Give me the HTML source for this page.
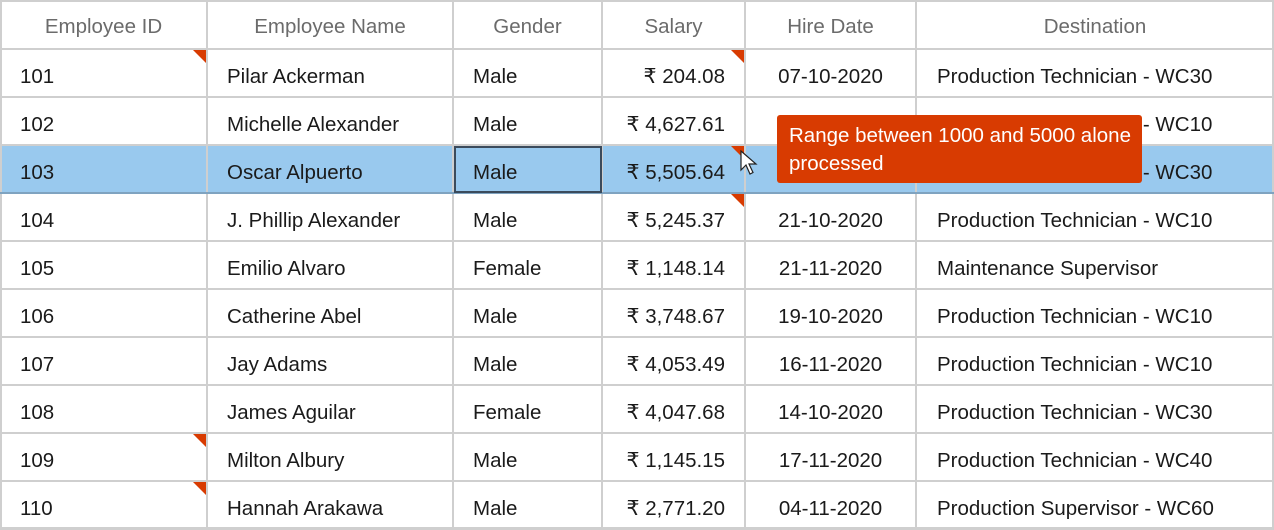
<!DOCTYPE html>
<html><head><style>
body{margin:0;width:1274px;height:529px;overflow:hidden;background:#fff;font-family:"Liberation Sans",sans-serif;font-size:20.5px;color:#1a1a1a;position:relative}
.c{position:absolute;box-sizing:border-box;white-space:nowrap;line-height:52px;overflow:hidden}
.h{color:#6b6b6b;text-align:center;line-height:54px}
.vl{position:absolute;top:0;width:2px;height:529px;background:#cfcfcf}
.hl{position:absolute;left:0;width:1274px;height:2px;background:#cfcfcf}
.tri{position:absolute;width:0;height:0;border-top:13px solid #d83b01;border-left:13px solid transparent}
</style></head><body>
<div style="position:absolute;left:0;top:145px;width:1274px;height:48px;background:#99c9ee"></div>
<div id="g"></div>
<script>
var cols=[0,207,453,602,745,916,1274];
var H=["Employee ID","Employee Name","Gender","Salary","Hire Date","Destination"];
var R=[["101","Pilar Ackerman","Male","₹ 204.08","07-10-2020","Production Technician - WC30"],
["102","Michelle Alexander","Male","₹ 4,627.61","","Production Technician - WC10"],
["103","Oscar Alpuerto","Male","₹ 5,505.64","","Production Technician - WC30"],
["104","J. Phillip Alexander","Male","₹ 5,245.37","21-10-2020","Production Technician - WC10"],
["105","Emilio Alvaro","Female","₹ 1,148.14","21-11-2020","Maintenance Supervisor"],
["106","Catherine Abel","Male","₹ 3,748.67","19-10-2020","Production Technician - WC10"],
["107","Jay Adams","Male","₹ 4,053.49","16-11-2020","Production Technician - WC10"],
["108","James Aguilar","Female","₹ 4,047.68","14-10-2020","Production Technician - WC30"],
["109","Milton Albury","Male","₹ 1,145.15","17-11-2020","Production Technician - WC40"],
["110","Hannah Arakawa","Male","₹ 2,771.20","04-11-2020","Production Supervisor - WC60"]];
var s="";
for(var i=0;i<6;i++)s+='<div class="c h" style="left:'+cols[i]+'px;top:0;width:'+(cols[i+1]-cols[i])+'px;height:49px">'+H[i]+'</div>';
for(var r=0;r<10;r++){var y=49+r*48;
for(var i=0;i<6;i++){var w=cols[i+1]-cols[i];var st;
if(i==3)st="text-align:right;padding-right:20px";else if(i==4)st="text-align:center";else st="padding-left:"+(i==5?21:20)+"px";
s+='<div class="c" style="left:'+cols[i]+'px;top:'+(y+2)+'px;width:'+w+'px;height:47px;'+st+'">'+R[r][i]+'</div>';}
}
for(var i=0;i<7;i++){var x=cols[i]-1;if(x<0)x=0;if(i==6)x=1272;s+='<div class="vl" style="left:'+x+'px"></div>';}
s+='<div class="hl" style="top:0"></div>';
for(var r=0;r<=10;r++){var y=48+r*48;s+='<div class="hl" style="top:'+y+'px;'+(r==3?'background:#7fa3c0':'')+'"></div>';}
s+='<div class="hl" style="top:527px"></div>';
var t=[[0,1],[3,1],[3,3],[3,4],[0,9],[0,10]];
t.forEach(function(a){s+='<div class="tri" style="left:'+(cols[a[0]+1]-14)+'px;top:'+(48+(a[1]-1)*48+2)+'px"></div>';});
document.getElementById("g").innerHTML=s;
</script>
<div style="position:absolute;left:454px;top:146px;width:148px;height:47px;box-sizing:border-box;border:2px solid #3b4b5c"></div>
<svg style="position:absolute;left:740px;top:150px" width="18" height="26" viewBox="0 0 18 26"><path d="M1 1 L1 20 L6 15 L10 24 L13 22.5 L9 14 L16 14 Z" fill="#fff" stroke="#222" stroke-width="1.2"/></svg>
<div style="position:absolute;left:777px;top:115px;width:365px;height:68px;background:#d83b01;border-radius:3px;color:#fff;font-size:20.5px;line-height:28px;padding:7px 12px;box-sizing:border-box;white-space:nowrap">Range between 1000 and 5000 alone<br>processed</div>
</body></html>
